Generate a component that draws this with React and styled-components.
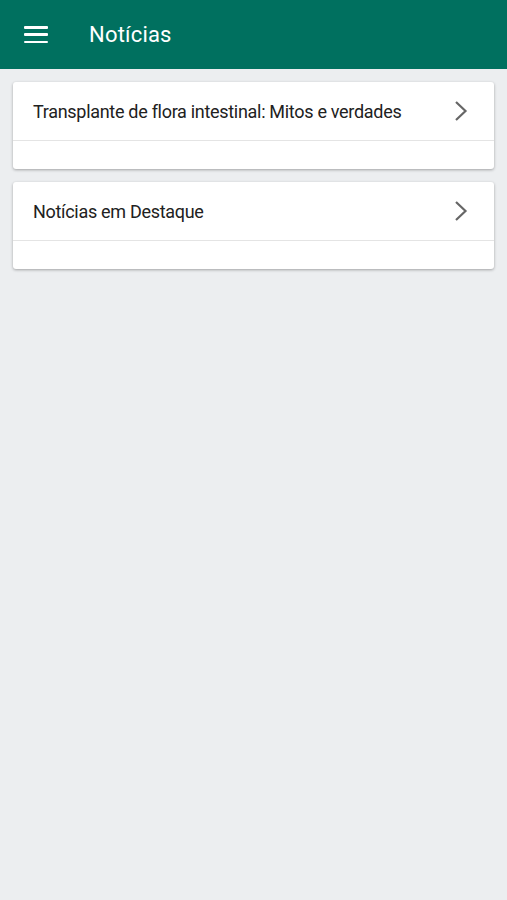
import React from "react";
import styled, { createGlobalStyle } from "styled-components";

const Global = createGlobalStyle`
  html, body {
    margin: 0;
    padding: 0;
    background: #eceef0;
    font-family: Roboto, "Noto Sans", sans-serif;
  }
`;

const Page = styled.div`
  min-height: 900px;
  background: #eceef0;
`;

const Barra = styled.header`
  height: 69px;
  background: #00705f;
  display: flex;
  align-items: center;
  padding: 0 0 0 24px;
  color: #fff;
`;

const Menu = styled.button`
  width: 24px;
  height: 17px;
  padding: 0;
  border: 0;
  background: none;
  display: flex;
  flex-direction: column;
  justify-content: space-between;
  margin-right: 41px;
  span {
    display: block;
    height: 2.5px;
    background: #fff;
    border-radius: 1px;
  }
`;

const Titulo = styled.h1`
  margin: 0;
  font-size: 22px;
  font-weight: 400;
  letter-spacing: 0.2px;
  color: #fff;
`;

const Lista = styled.main`
  padding: 13px 13px;
  display: flex;
  flex-direction: column;
  gap: 13px;
`;

const Tarjeta = styled.div`
  background: #fff;
  border-radius: 3px;
  box-shadow: 0 1px 3px rgba(0, 0, 0, 0.32);
`;

const Fila = styled.div`
  height: 58px;
  display: flex;
  align-items: center;
  justify-content: space-between;
  padding: 0 25px 0 20px;
  border-bottom: 1px solid #e4e4e4;
  font-size: 18px;
  letter-spacing: -0.3px;
  color: #212121;
`;

const Pie = styled.div`
  height: 28px;
`;

const Chevron = () => (
  <svg width="16" height="22" viewBox="0 0 16 22">
    <path d="M3 2 L12.5 11 L3 20" fill="none" stroke="#666" strokeWidth="2.2" />
  </svg>
);

const noticias = [
  "Transplante de flora intestinal: Mitos e verdades",
  "Notícias em Destaque",
];

export default function App() {
  return (
    <Page>
      <Global />
      <Barra>
        <Menu aria-label="menu">
          <span />
          <span />
          <span />
        </Menu>
        <Titulo>Notícias</Titulo>
      </Barra>
      <Lista>
        {noticias.map((n) => (
          <Tarjeta key={n}>
            <Fila>
              <span>{n}</span>
              <Chevron />
            </Fila>
            <Pie />
          </Tarjeta>
        ))}
      </Lista>
    </Page>
  );
}
